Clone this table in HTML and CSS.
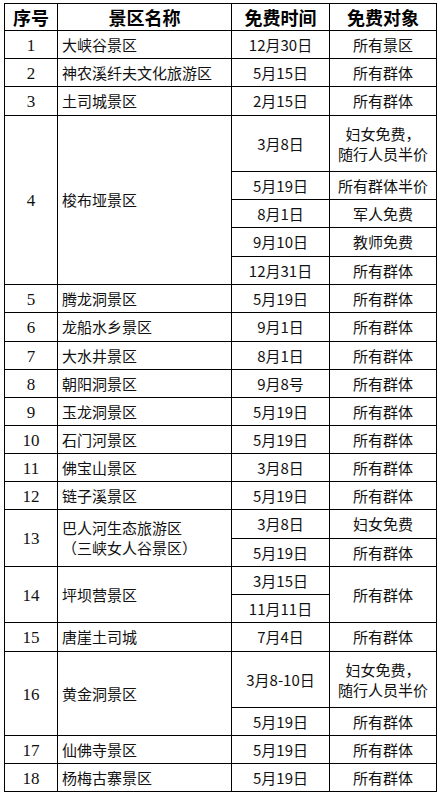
FILE: index.html
```html
<!DOCTYPE html>
<html lang="zh-CN">
<head>
<meta charset="utf-8">
<title>免费景区</title>
<link rel="stylesheet" href="styles.css">
</head>
<body>
<table class="tbl">
  <colgroup>
    <col class="c1"><col class="c2"><col class="c3"><col class="c4">
  </colgroup>
  <thead>
    <tr class="h27"><th>序号</th><th>景区名称</th><th>免费时间</th><th>免费对象</th></tr>
  </thead>
  <tbody>
    <tr class="h28"><td class="no">1</td><td class="name">大峡谷景区</td><td class="date">12月30日</td><td class="who">所有景区</td></tr>
    <tr class="h28"><td class="no">2</td><td class="name">神农溪纤夫文化旅游区</td><td class="date">5月15日</td><td class="who">所有群体</td></tr>
    <tr class="h29"><td class="no">3</td><td class="name">土司城景区</td><td class="date">2月15日</td><td class="who">所有群体</td></tr>

    <tr class="h56"><td class="no" rowspan="5">4</td><td class="name" rowspan="5">梭布垭景区</td><td class="date">3月8日</td><td class="who multi">妇女免费，<br>随行人员半价</td></tr>
    <tr class="h28"><td class="date">5月19日</td><td class="who">所有群体半价</td></tr>
    <tr class="h28"><td class="date">8月1日</td><td class="who">军人免费</td></tr>
    <tr class="h29"><td class="date">9月10日</td><td class="who">教师免费</td></tr>
    <tr class="h28"><td class="date">12月31日</td><td class="who">所有群体</td></tr>

    <tr class="h28"><td class="no">5</td><td class="name">腾龙洞景区</td><td class="date">5月19日</td><td class="who">所有群体</td></tr>
    <tr class="h29"><td class="no">6</td><td class="name">龙船水乡景区</td><td class="date">9月1日</td><td class="who">所有群体</td></tr>
    <tr class="h28"><td class="no">7</td><td class="name">大水井景区</td><td class="date">8月1日</td><td class="who">所有群体</td></tr>
    <tr class="h28"><td class="no">8</td><td class="name">朝阳洞景区</td><td class="date">9月8号</td><td class="who">所有群体</td></tr>
    <tr class="h28"><td class="no">9</td><td class="name">玉龙洞景区</td><td class="date">5月19日</td><td class="who">所有群体</td></tr>
    <tr class="h28"><td class="no">10</td><td class="name">石门河景区</td><td class="date">5月19日</td><td class="who">所有群体</td></tr>
    <tr class="h28"><td class="no">11</td><td class="name">佛宝山景区</td><td class="date">3月8日</td><td class="who">所有群体</td></tr>
    <tr class="h28"><td class="no">12</td><td class="name">链子溪景区</td><td class="date">5月19日</td><td class="who">所有群体</td></tr>

    <tr class="h29"><td class="no" rowspan="2">13</td><td class="name two" rowspan="2">巴人河生态旅游区<br>（三峡女人谷景区）</td><td class="date">3月8日</td><td class="who">妇女免费</td></tr>
    <tr class="h28"><td class="date">5月19日</td><td class="who">所有群体</td></tr>

    <tr class="h28"><td class="no" rowspan="2">14</td><td class="name" rowspan="2">坪坝营景区</td><td class="date">3月15日</td><td class="who" rowspan="2">所有群体</td></tr>
    <tr class="h28"><td class="date">11月11日</td></tr>

    <tr class="h29"><td class="no">15</td><td class="name">唐崖土司城</td><td class="date">7月4日</td><td class="who">所有群体</td></tr>

    <tr class="h56"><td class="no" rowspan="2">16</td><td class="name" rowspan="2">黄金洞景区</td><td class="date">3月8-10日</td><td class="who multi">妇女免费，<br>随行人员半价</td></tr>
    <tr class="h28"><td class="date">5月19日</td><td class="who">所有群体</td></tr>

    <tr class="h28"><td class="no">17</td><td class="name">仙佛寺景区</td><td class="date">5月19日</td><td class="who">所有群体</td></tr>
    <tr class="h28"><td class="no">18</td><td class="name">杨梅古寨景区</td><td class="date">5月19日</td><td class="who">所有群体</td></tr>
  </tbody>
</table>
</body>
</html>
```

FILE: styles.css
```css
html, body {
  margin: 0;
  padding: 0;
  background: #ffffff;
}

body {
  padding: 3px 0 0 4px;
  color: #111111;
  font-family: "Noto Sans CJK SC", "Noto Sans", sans-serif;
  font-size: 15px;
}

.tbl {
  border-collapse: separate;
  border-spacing: 0;
  table-layout: fixed;
  width: 433px;
  border-top: 1px solid #000;
  border-left: 1px solid #000;
}

.c1 { width: 53px; }
.c2 { width: 174px; }
.c3 { width: 98px; }
.c4 { width: 107px; }

.tbl th,
.tbl td {
  border-right: 1px solid #000;
  border-bottom: 1px solid #000;
  padding: 0;
  vertical-align: middle;
  text-align: center;
  line-height: 18px;
  white-space: nowrap;
  overflow: hidden;
}

.tbl th {
  font-size: 18px;
  font-weight: bold;
  color: #000;
}

.h27 { height: 27px; }
.h28 { height: 28px; }
.h29 { height: 29px; }
.h56 { height: 56px; }

.tbl td.no {
  font-family: "Liberation Serif", "Times New Roman", serif;
  font-size: 17px;
  padding-top: 2px;
}

.tbl td.name {
  text-align: left;
  padding-left: 4px;
}

.tbl td.name.two {
  line-height: 20px;
}

.tbl td.multi {
  line-height: 20px;
}
```
